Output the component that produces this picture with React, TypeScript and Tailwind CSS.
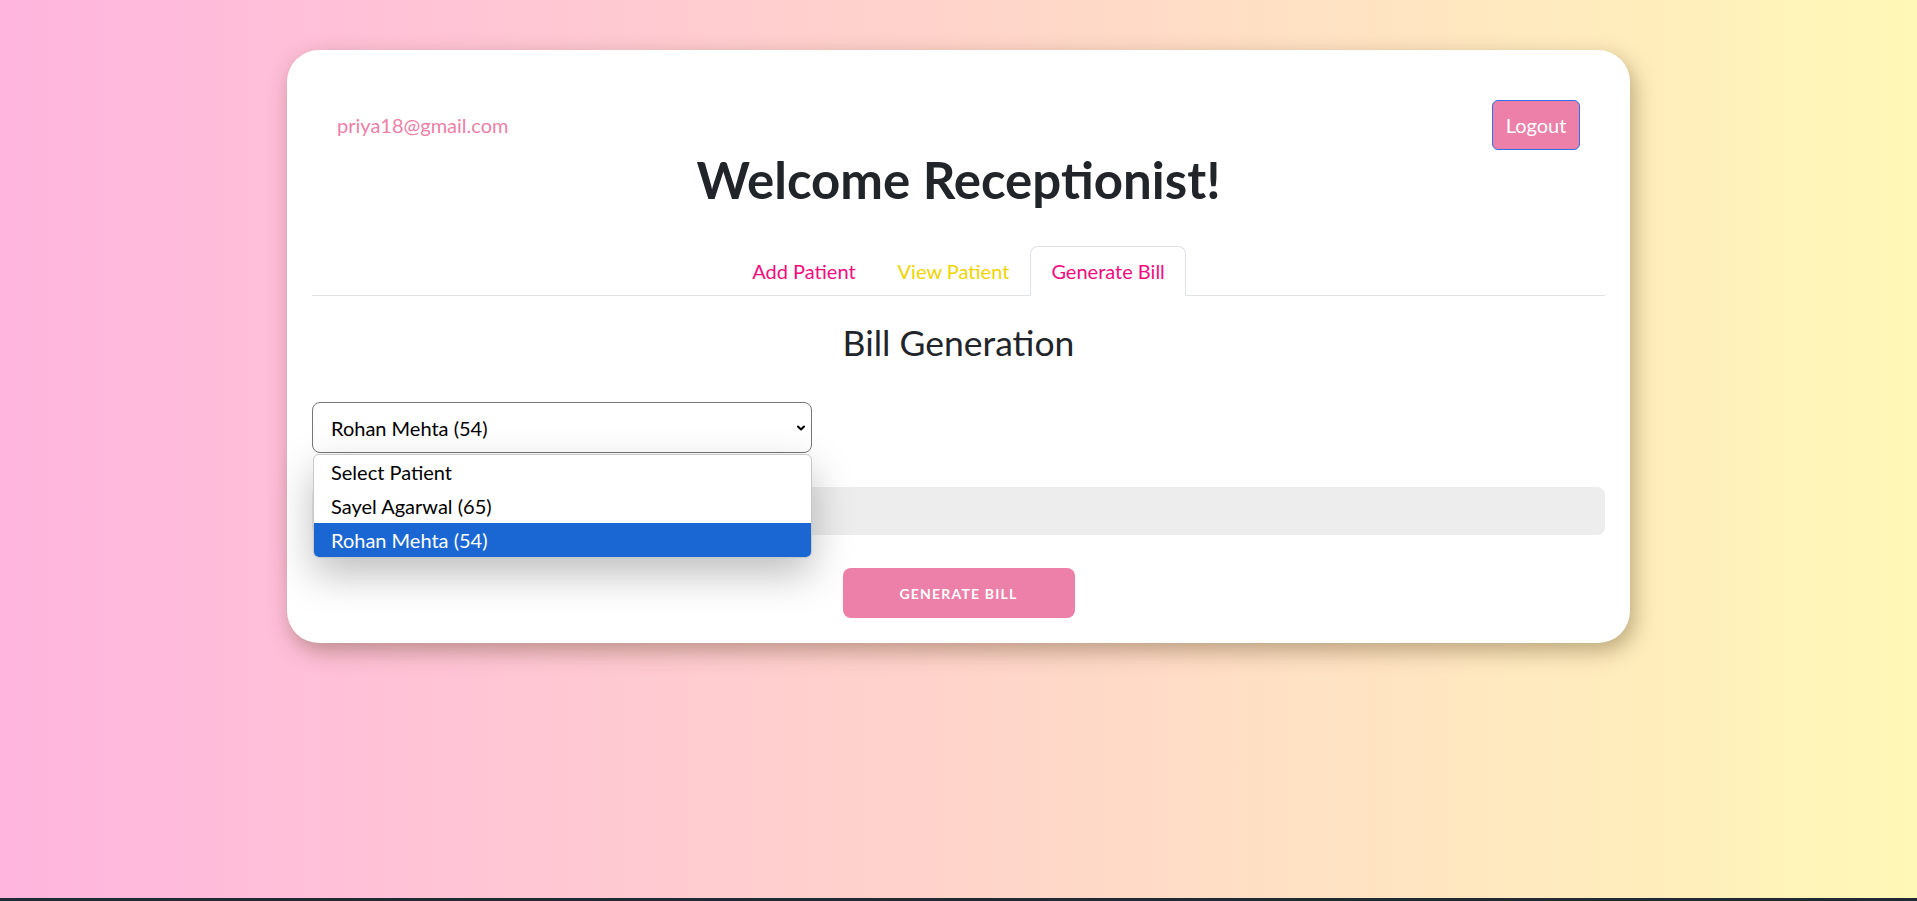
import { ChevronDown } from "lucide-react";

const tabs = [
  { label: "Add Patient", color: "text-[#f50a7e]", active: false },
  { label: "View Patient", color: "text-[#f0d400]", active: false },
  { label: "Generate Bill", color: "text-[#f50a7e]", active: true },
];

const patients = ["Select Patient", "Sayel Agarwal (65)", "Rohan Mehta (54)"];

export default function App() {
  return (
    <div className="flex h-screen flex-col font-['Lato','Noto_Sans',sans-serif]">
      <div className="flex-1 bg-gradient-to-r from-[#ffb5de] via-[#ffd4ca] to-[#fff8b6] pt-[50px]">
        <div className="mx-auto w-[1343px] rounded-[32px] bg-white p-[25px] shadow-[4px_8px_22px_rgba(60,40,0,0.35)]">
          <div className="mt-[25px] flex items-center justify-between px-[25px]">
            <span className="text-[20px] text-[#ee7fa7]">priya18@gmail.com</span>
            <button className="h-[50px] w-[88px] rounded-[6px] border border-[#2f6fe8] bg-[#ec80a8] text-[20px] text-white">
              Logout
            </button>
          </div>

          <h1 className="text-center text-[51px] font-bold leading-[60px] text-[#212529]">
            Welcome Receptionist!
          </h1>

          <div className="mt-[36px] flex justify-center border-b border-[#dee2e6]">
            {tabs.map((tab) => (
              <div
                key={tab.label}
                className={`-mb-px px-[20px] py-[10px] text-[20px] leading-[28px] ${tab.color} ${
                  tab.active
                    ? "rounded-t-[8px] border border-[#dee2e6] border-b-white bg-white"
                    : "border border-transparent"
                }`}
              >
                {tab.label}
              </div>
            ))}
          </div>

          <h2 className="mt-[26px] text-center text-[35.5px] leading-[42px] text-[#212529]">
            Bill Generation
          </h2>

          <div className="relative mt-[38px] w-[500px]">
            <select
              defaultValue="Rohan Mehta (54)"
              className="h-[51px] w-full appearance-none rounded-[8px] border border-[#767676] bg-white pl-[18px] text-[20px] text-black"
            >
              {patients.map((p) => (
                <option key={p}>{p}</option>
              ))}
            </select>
            <ChevronDown
              className="pointer-events-none absolute right-[5px] top-[20px] h-[12px] w-[12px] text-black"
              strokeWidth={4}
            />

            {/* open dropdown list */}
            <div className="absolute left-[1px] right-0 top-[52px] z-10 overflow-hidden rounded-[6px] border border-[#c8c8c8] bg-white shadow-[0_16px_40px_rgba(0,0,0,0.26)]">
              {patients.map((p, i) => (
                <div
                  key={p}
                  className={`h-[34px] pl-[17px] text-[20px] leading-[34px] ${
                    i === 2 ? "bg-[#1a67d4] text-white" : "text-black"
                  }`}
                >
                  {p}
                </div>
              ))}
            </div>
          </div>

          <div className="mt-[34px] h-[48px] w-full rounded-[8px] bg-[#ededed]" />

          <div className="mt-[33px] flex justify-center">
            <button className="h-[50px] w-[232px] rounded-[8px] bg-[#ec80a8] text-[14px] font-bold uppercase tracking-[1.2px] text-white">
              Generate Bill
            </button>
          </div>
        </div>
      </div>
      <div className="h-[3px] bg-[#1f2a33]" />
    </div>
  );
}
